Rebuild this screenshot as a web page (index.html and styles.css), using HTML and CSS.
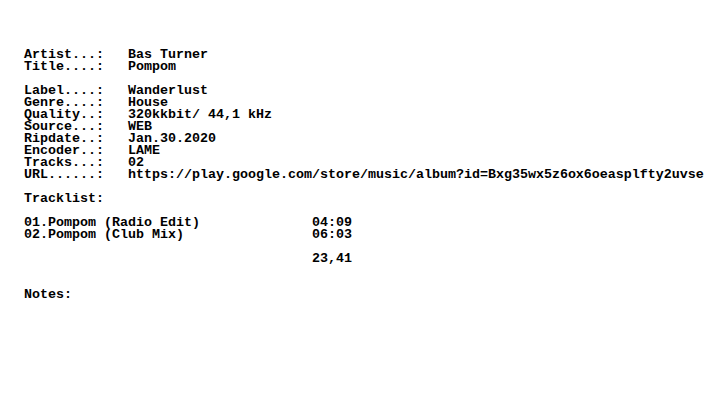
FILE: index.html
```html
<!DOCTYPE html>
<html>
<head>
<meta charset="utf-8">
<link rel="stylesheet" href="styles.css">
</head>
<body>
<pre class="nfo">Artist...:   Bas Turner
Title....:   Pompom

Label....:   Wanderlust
Genre....:   House
Quality..:   320kkbit/ 44,1 kHz
Source...:   WEB
Ripdate..:   Jan.30.2020
Encoder..:   LAME
Tracks...:   02
URL......:   https://play.google.com/store/music/album?id=Bxg35wx5z6ox6oeasplfty2uvse

Tracklist:

01.Pompom (Radio Edit)              04:09
02.Pompom (Club Mix)                06:03

                                    23,41


Notes:</pre>
</body>
</html>
```
FILE: styles.css
```css
html, body {
  margin: 0;
  padding: 0;
  background: #ffffff;
  overflow: hidden;
}
.nfo {
  margin: 0;
  padding: 49px 0 0 24px;
  font-family: "Liberation Mono", "DejaVu Sans Mono", monospace;
  font-weight: bold;
  font-size: 13.333px;
  line-height: 12px;
  color: #000000;
  white-space: pre;
}
```
